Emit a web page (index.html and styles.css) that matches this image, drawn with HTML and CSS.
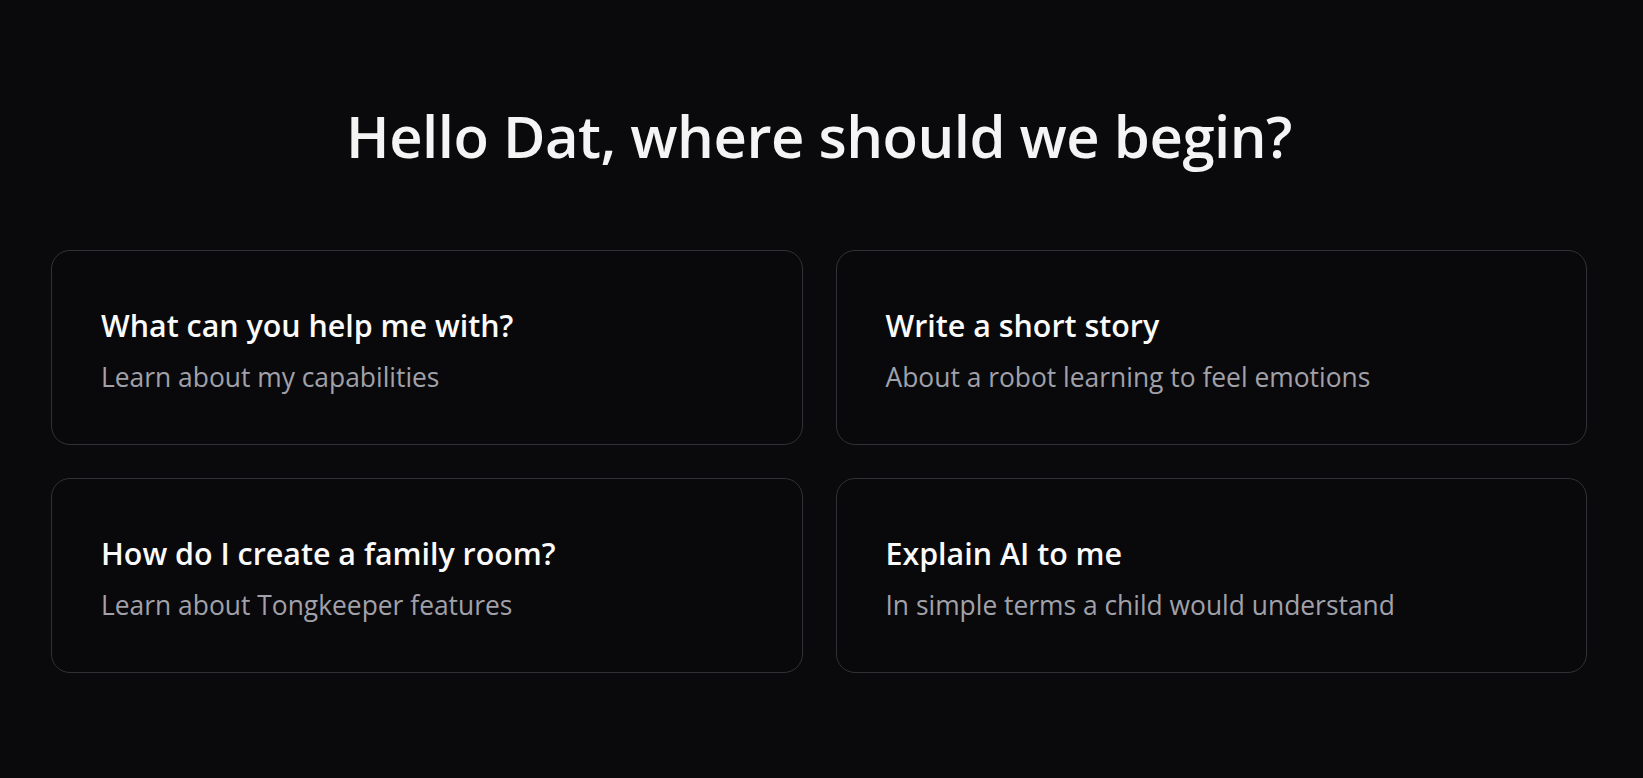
FILE: index.html
```html
<!DOCTYPE html>
<html lang="en">
<head>
<meta charset="utf-8">
<title>Hello Dat</title>
<link rel="stylesheet" href="styles.css">
</head>
<body>
<main class="page">
  <h1 class="greeting">Hello Dat, where should we begin?</h1>
  <section class="suggestions">
    <button class="card">
      <span class="card-title">What can you help me with?</span>
      <span class="card-sub">Learn about my capabilities</span>
    </button>
    <button class="card">
      <span class="card-title">Write a short story</span>
      <span class="card-sub">About a robot learning to feel emotions</span>
    </button>
    <button class="card">
      <span class="card-title">How do I create a family room?</span>
      <span class="card-sub">Learn about Tongkeeper features</span>
    </button>
    <button class="card">
      <span class="card-title">Explain AI to me</span>
      <span class="card-sub">In simple terms a child would understand</span>
    </button>
  </section>
</main>
</body>
</html>
```
FILE: styles.css
```css
* { box-sizing: border-box; }
html, body {
  margin: 0;
  height: 100%;
  background: #0a0a0c;
}
body {
  font-family: "Open Sans", "Noto Sans", sans-serif;
  color: #f4f4f5;
}
.page {
  padding: 96px 56px 0 51px;
}
.greeting {
  margin: 0;
  text-align: center;
  font-size: 58px;
  font-weight: 600;
  line-height: 80px;
  color: #f4f4f5;
  letter-spacing: -0.5px;
}
.suggestions {
  margin-top: 74px;
  display: grid;
  grid-template-columns: 1fr 1fr;
  row-gap: 33px;
  column-gap: 33px;
}
.card {
  display: flex;
  flex-direction: column;
  align-items: flex-start;
  gap: 15px;
  padding: 57px 48px 49px 49px;
  background: #09090b;
  border: 1px solid #323236;
  border-radius: 19px;
  font-family: inherit;
  text-align: left;
  cursor: pointer;
}
.card-title {
  font-size: 30.4px;
  font-weight: 600;
  line-height: 36px;
  color: #fafafa;
}
.card-sub {
  font-size: 26.4px;
  font-weight: 400;
  line-height: 36px;
  color: #a1a1aa;
}
```
